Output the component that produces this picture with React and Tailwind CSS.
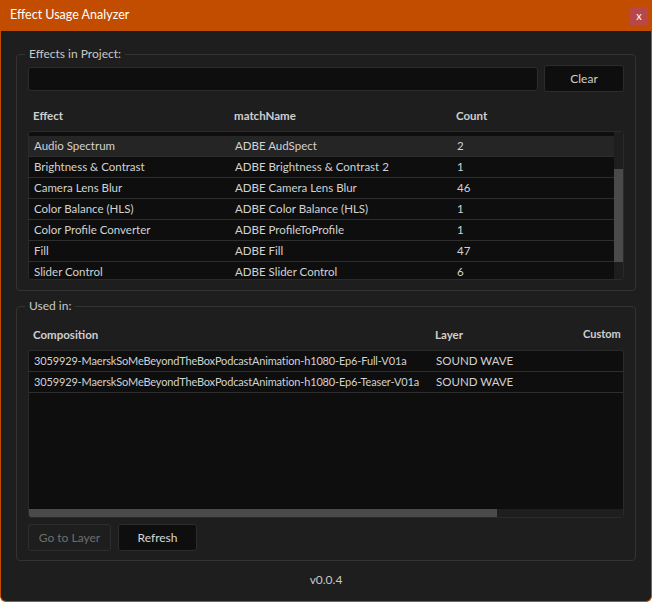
import React from 'react'

const effects = [
    { name: 'Audio Spectrum', match: 'ADBE AudSpect', count: 2 },
    { name: 'Brightness & Contrast', match: 'ADBE Brightness & Contrast 2', count: 1 },
    { name: 'Camera Lens Blur', match: 'ADBE Camera Lens Blur', count: 46 },
    { name: 'Color Balance (HLS)', match: 'ADBE Color Balance (HLS)', count: 1 },
    { name: 'Color Profile Converter', match: 'ADBE ProfileToProfile', count: 1 },
    { name: 'Fill', match: 'ADBE Fill', count: 47 },
    { name: 'Slider Control', match: 'ADBE Slider Control', count: 6 },
]

const usages = [
    { comp: '3059929-MaerskSoMeBeyondTheBoxPodcastAnimation-h1080-Ep6-Full-V01a', layer: 'SOUND WAVE' },
    { comp: '3059929-MaerskSoMeBeyondTheBoxPodcastAnimation-h1080-Ep6-Teaser-V01a', layer: 'SOUND WAVE' },
]

const Legend = ({ children }) => (
    <span className="absolute left-[8px] top-[-9px] bg-[#1e1e1e] px-[4px] text-[12px] leading-[16px] text-[#c8c8c8]">{children}</span>
)

export default function App() {
    return (
        <div className="w-[652px] h-[602px] flex flex-col bg-[#1e1e1e] border border-t-0 border-[#c24d00] rounded-b-[6px] overflow-hidden text-[#d2d2d2]" style={{ fontFamily: 'Lato, "Noto Sans", sans-serif' }}>
            {/* Title bar */}
            <div className="h-[31px] shrink-0 -mx-px bg-[#c24d00] flex items-center justify-between pl-[10px] pr-[4px]">
                <span className="text-[12.5px] text-white">Effect Usage Analyzer</span>
                <div className="w-[18px] h-[18px] bg-[#b84848] flex items-center justify-center text-[11px] text-white leading-none">x</div>
            </div>

            <div className="flex-1 flex flex-col px-[15px] pt-[23px]">
                {/* Effects fieldset */}
                <div className="relative h-[237px] border border-[#333333] rounded-[4px] px-[11px] pt-[10px]">
                    <Legend>Effects in Project:</Legend>
                    <div className="flex gap-[6px] items-center">
                        <div className="flex-1 h-[24px] bg-[#0e0e0e] border border-[#2c2c2c] rounded-[3px]" />
                        <button className="w-[80px] h-[27px] bg-[#0e0e0e] border border-[#2c2c2c] rounded-[3px] text-[12px] text-[#cfcfcf]">Clear</button>
                    </div>
                    <div className="flex h-[39px] items-center px-[5px] text-[11.5px] font-bold text-[#cfcfcf] pt-[9px]">
                        <span className="w-[201px]">Effect</span>
                        <span className="w-[222px]">matchName</span>
                        <span>Count</span>
                    </div>
                    <div className="h-[149px] bg-[#0e0e0e] border border-[#2a2a2a] rounded-[3px] flex overflow-hidden">
                        <div className="flex-1 overflow-hidden pt-[4px]">
                            {effects.map((e, i) => (
                                <div key={e.name} className={`flex h-[21px] items-center px-[5px] text-[11.5px] border-b border-[#2e2e2e] ${i === 0 ? 'bg-[#252525]' : ''}`}>
                                    <span className="w-[201px] whitespace-nowrap">{e.name}</span>
                                    <span className="w-[222px] whitespace-nowrap">{e.match}</span>
                                    <span>{e.count}</span>
                                </div>
                            ))}
                        </div>
                        <div className="w-[9px] bg-[#1e1e1e] flex flex-col pt-[37px] pb-[17px]">
                            <div className="flex-1 bg-[#4a4a4a]" />
                        </div>
                    </div>
                </div>

                {/* Used in fieldset */}
                <div className="relative mt-[15px] h-[255px] border border-[#333333] rounded-[4px] px-[11px] pt-[12px]">
                    <Legend>Used in:</Legend>
                    <div className="flex h-[31px] items-center pl-[5px] text-[11.5px] font-bold text-[#cfcfcf] whitespace-nowrap">
                        <span className="w-[402px] shrink-0">Composition</span>
                        <span className="w-[148px] shrink-0">Layer</span>
                        <span className="text-[11px]">Custom</span>
                    </div>
                    <div className="h-[168px] bg-[#0e0e0e] border border-[#2a2a2a] rounded-[3px] flex flex-col overflow-hidden">
                        <div className="flex-1">
                            {usages.map(u => (
                                <div key={u.comp} className="flex h-[21px] items-center px-[5px] text-[11.5px] border-b border-[#2e2e2e] whitespace-nowrap">
                                    <span className="w-[402px] shrink-0 text-[11px] tracking-[-0.15px]">{u.comp}</span>
                                    <span>{u.layer}</span>
                                </div>
                            ))}
                        </div>
                        <div className="h-[8px] bg-[#1e1e1e] flex">
                            <div className="w-[468px] bg-[#4a4a4a]" />
                        </div>
                    </div>
                    <div className="flex gap-[7px] mt-[6px]">
                        <button className="w-[83px] h-[27px] border border-[#2e2e2e] rounded-[3px] text-[12px] text-[#6e6e6e]">Go to Layer</button>
                        <button className="w-[79px] h-[27px] bg-[#0e0e0e] border border-[#2c2c2c] rounded-[3px] text-[12px] text-[#d8d8d8]">Refresh</button>
                    </div>
                </div>

                <div className="text-center text-[12px] text-[#c8c8c8] mt-[10px]">v0.0.4</div>
            </div>
        </div>
    )
}
